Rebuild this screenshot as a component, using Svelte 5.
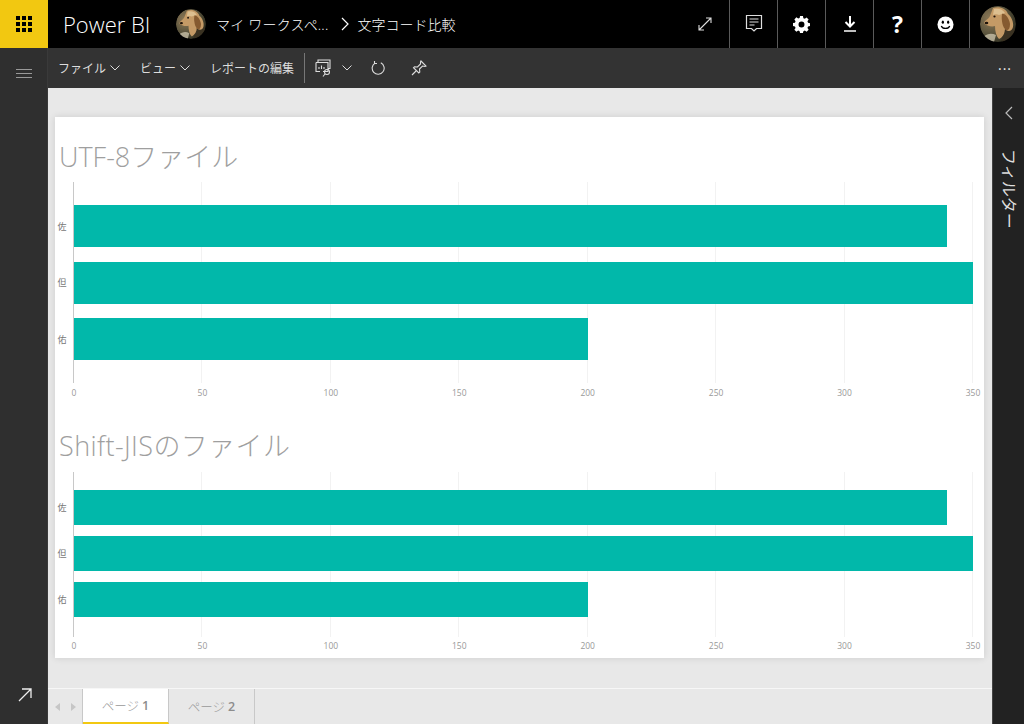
<script>
  const sections = [
    { title: 'UTF-8ファイル', cls: 'first' },
    { title: 'Shift-JISのファイル', cls: 'second' }
  ];
  const rows = [
    { label: '佐', value: 340 },
    { label: '但', value: 350 },
    { label: '佑', value: 200 }
  ];
  const ticks = [0, 50, 100, 150, 200, 250, 300, 350];
  const max = 350;
</script>

{#snippet dog(id)}
  <svg class="dog" viewBox="0 0 36 36" aria-hidden="true">
    <defs>
      <radialGradient id={id} cx="0.3" cy="0.35" r="0.8">
        <stop offset="0" stop-color="#8f7a58" />
        <stop offset="0.6" stop-color="#55503a" />
        <stop offset="1" stop-color="#26261a" />
      </radialGradient>
    </defs>
    <circle cx="18" cy="18" r="18" fill="url(#{id})" />
    <path d="M22 36c5-1 10-5 13-11l-5-13-10-3z" fill="#3a3222" />
    <path d="M13 2c6-2 13 0 15 6 3 2 6 8 5 13-1 4-4 5-7 3l-1-2c0 5-2 9-6 11-3-3-4-8-4-13-3 1-9 0-11-3 1-3 5-4 6-7z" fill="#c49a66" />
    <path d="M14 3c4-1 9 0 11 4l-6 2c-2-1-4-1-6 0z" fill="#dcbf90" />
    <path d="M22 8c3-1 7 4 8 10 0 5-2 7-4 6-3-2-5-9-4-16z" fill="#855a30" />
    <ellipse cx="6.500" cy="17" rx="1.800" ry="1.300" fill="#1f140c" />
    <circle cx="14.500" cy="10.500" r="1.100" fill="#1d130c" />
    <path d="M3 31c5-4 9-4 13-2l-2 7H8z" fill="#d8d0b8" opacity="0.700" />
  </svg>
{/snippet}

<div class="app">
  <header class="top">
    <button class="waffle" aria-label="アプリ">
      <svg viewBox="0 0 16 16" width="16" height="16" fill="#000">
        {#each [0, 6, 12] as y}
          {#each [0, 6, 12] as x}
            <rect x={x} y={y} width="4" height="4" />
          {/each}
        {/each}
      </svg>
    </button>
    <div class="brand">Power BI</div>
    <div class="avatar small">{@render dog('dog-a')}</div>
    <div class="crumb first-crumb">マイ ワークスペ...</div>
    <svg class="crumb-sep" viewBox="0 0 8 14" width="8" height="14" fill="none" stroke="#fff" stroke-width="1.200"><path d="M1 1l6 6-6 6" /></svg>
    <div class="crumb last-crumb">文字コード比較</div>

    <div class="actions">
      <div class="act plain">
        <svg viewBox="0 0 16 16" width="16" height="16" fill="none" stroke="#ddd" stroke-width="1.100"><path d="M2 14L14 2M9 2h5v5M2 9v5h5" /></svg>
      </div>
      <div class="act">
        <svg viewBox="0 0 18 20" width="18" height="20" fill="none" stroke="#ddd" stroke-width="1.200"><path d="M1.500 1.500h15v13h-5l-2.500 2.500-2.500-2.500h-5zM4.500 5h9M4.500 8h9M4.500 11h5" /></svg>
      </div>
      <div class="act">
        <svg viewBox="0 0 20 20" width="17" height="17"><path fill="#fff" fill-rule="evenodd" d="M8.300 0h3.400l.5 2.500 1.700.7 2.100-1.400 2.400 2.400-1.400 2.100.7 1.700 2.300.5v3.400l-2.300.5-.7 1.700 1.400 2.100-2.400 2.400-2.100-1.400-1.700.7-.5 2.100H8.300l-.5-2.100-1.700-.7-2.100 1.400-2.400-2.400 1.400-2.100-.7-1.700L0 11.700V8.300l2.300-.5.7-1.700-1.400-2.100L4 1.600l2.100 1.400 1.700-.7zM10 6.500a3.500 3.500 0 100 7 3.500 3.500 0 000-7z" /></svg>
      </div>
      <div class="act">
        <svg viewBox="0 0 14 16" width="14" height="16" fill="none" stroke="#fff" stroke-width="2"><path d="M7 0v10M2.500 6L7 10.500 11.500 6" /><path d="M1 15h12" stroke-width="1.500" /></svg>
      </div>
      <div class="act q">?</div>
      <div class="act">
        <svg viewBox="0 0 18 18" width="17" height="17"><circle cx="9" cy="9" r="8.500" fill="#fff" /><ellipse cx="6.200" cy="6.500" rx="1.200" ry="1.700" fill="#000" /><ellipse cx="11.800" cy="6.500" rx="1.200" ry="1.700" fill="#000" /><path d="M4.500 10.500c1.500 3.500 7.500 3.500 9 0" fill="none" stroke="#000" stroke-width="1.300" /></svg>
      </div>
      <div class="act me"><div class="avatar large">{@render dog('dog-b')}</div></div>
    </div>
  </header>

  <div class="body">
    <aside class="rail">
      <button class="burger" aria-label="メニュー"><span></span><span></span><span></span></button>
      <svg class="expand" viewBox="0 0 14 14" width="14" height="14" fill="none" stroke="#eee" stroke-width="1.300"><path d="M1 13L13 1M4 1h9v9" /></svg>
    </aside>

    <div class="main">
      <nav class="toolbar">
        <span class="menu">ファイル<svg class="chev" viewBox="0 0 10 6" width="10" height="6"><path d="M.5.500L5 5 9.500.5" /></svg></span>
        <span class="menu">ビュー<svg class="chev" viewBox="0 0 10 6" width="10" height="6"><path d="M.5.500L5 5 9.500.5" /></svg></span>
        <span class="menu">レポートの編集</span>
        <span class="divider"></span>
        <svg class="tool" viewBox="0 0 18 18" width="18" height="18" fill="none" stroke="#ddd" stroke-width="1.100"><path d="M3 3.500V1h12v8.500h-2M1 3.500h12v9H8M1 3.500v9h4M4 10V8M6.500 10V6.500M9 10V8" /><circle cx="12" cy="13" r="2.500" /><path d="M10 15l-2 2.500" /></svg>
        <svg class="chev tool-chev" viewBox="0 0 10 6" width="10" height="6"><path d="M.5.500L5 5 9.500.5" /></svg>
        <svg class="tool refresh" viewBox="0 0 14 14" width="14" height="14" fill="none" stroke="#ddd" stroke-width="1.100"><path d="M4 2.100a6 6 0 105.800-.3M3.500 0v2.500H6" /></svg>
        <svg class="tool pin" viewBox="0 0 16 16" width="16" height="16" fill="none" stroke="#ddd" stroke-width="1.100"><path d="M10 1l5 5-1 .5-2.500-.5-3 3 .3 3-1 1-5.300-5.300 1-1 3 .3 3-3L9.500 2zM5 11l-4 4" /></svg>
        <span class="more">···</span>
      </nav>

      <div class="work">
        <div class="canvas-wrap">
          <div class="canvas">
            <div class="card">
              {#each sections as s}
                <section class={s.cls}>
                  <h2>{s.title}</h2>
                  <div class="chart">
                    <div class="labels">
                      {#each rows as r}<span>{r.label}</span>{/each}
                    </div>
                    <div class="plot">
                      <div class="grid">
                        {#each ticks as t}<i></i>{/each}
                      </div>
                      <div class="bars">
                        {#each rows as r}
                          <div class="bar" style="width:{(r.value / max) * 100}%"></div>
                        {/each}
                      </div>
                    </div>
                  </div>
                  <div class="ticks">
                    {#each ticks as t}<span><b>{t}</b></span>{/each}
                  </div>
                </section>
              {/each}
            </div>
          </div>
          <div class="tabs">
            <div class="arrows">
              <svg viewBox="0 0 5 8" width="5" height="8"><path d="M5 0v8L0 4z" /></svg>
              <svg viewBox="0 0 5 8" width="5" height="8"><path d="M0 0v8l5-4z" /></svg>
            </div>
            <div class="tab active">ページ <b>1</b></div>
            <div class="tab">ページ <b>2</b></div>
          </div>
        </div>
        <aside class="filters">
          <svg viewBox="0 0 8 14" width="8" height="14" fill="none" stroke="#bbb" stroke-width="1.200"><path d="M7 1L1 7l6 6" /></svg>
          <div class="filter-label">フィルター</div>
        </aside>
      </div>
    </div>
  </div>
</div>

<style>
  :global(body) {
    margin: 0;
    background: #e8e8e8;
  }
  .app {
    width: 1024px;
    height: 724px;
    display: flex;
    flex-direction: column;
    overflow: hidden;
    font-family: "Open Sans", "Noto Sans CJK JP", sans-serif;
  }
  button {
    border: 0;
    padding: 0;
    background: none;
  }

  .top {
    height: 48px;
    flex: none;
    background: #000;
    color: #fff;
    display: flex;
    align-items: center;
  }
  .waffle {
    width: 48px;
    height: 48px;
    background: #f2c811;
    display: flex;
    align-items: center;
    justify-content: center;
  }
  .brand {
    margin-left: 15px;
    width: 113px;
    font-size: 22px;
    font-weight: 300;
    white-space: nowrap;
  }
  .avatar {
    border-radius: 50%;
    overflow: hidden;
    flex: none;
  }
  .avatar.small {
    width: 30px;
    height: 30px;
  }
  .avatar.large {
    width: 36px;
    height: 36px;
  }
  .dog {
    display: block;
    width: 100%;
    height: 100%;
    filter: blur(0.4px);
  }
  .crumb {
    font-size: 14px;
    font-weight: 300;
    white-space: nowrap;
  }
  .first-crumb {
    margin-left: 10px;
    letter-spacing: 0.2px;
  }
  .crumb-sep {
    margin-left: 13px;
  }
  .last-crumb {
    margin-left: 8px;
  }
  .actions {
    margin-left: auto;
    display: flex;
    height: 48px;
  }
  .act {
    width: 47px;
    border-left: 1px solid #5a5a5a;
    display: flex;
    align-items: center;
    justify-content: center;
  }
  .act.plain {
    border-left: 0;
    width: 48px;
  }
  .act.q {
    font-size: 23px;
    font-weight: 700;
    font-family: "Open Sans", sans-serif;
  }
  .act.me {
    width: 55px;
    justify-content: flex-start;
    padding-left: 10px;
    box-sizing: border-box;
  }

  .body {
    flex: 1;
    display: flex;
    min-height: 0;
  }
  .rail {
    width: 48px;
    flex: none;
    background: #2f2f2f;
    display: flex;
    flex-direction: column;
    align-items: center;
    border-right: 1px solid #3a3a3a;
    box-sizing: border-box;
  }
  .burger {
    margin-top: 21px;
    width: 16px;
    display: flex;
    flex-direction: column;
    gap: 3px;
  }
  .burger span {
    height: 1px;
    background: #999;
    display: block;
  }
  .expand {
    margin-top: auto;
    margin-bottom: 22px;
    margin-left: 3px;
  }

  .main {
    flex: 1;
    min-width: 0;
    display: flex;
    flex-direction: column;
  }
  .toolbar {
    height: 40px;
    flex: none;
    background: #333;
    color: #ddd;
    display: flex;
    align-items: center;
    font-size: 12px;
    padding-left: 10px;
  }
  .menu {
    display: flex;
    align-items: center;
    gap: 4px;
    margin-right: 20px;
    white-space: nowrap;
  }
  .menu:nth-child(3) {
    margin-right: 10px;
  }
  .chev {
    fill: none;
    stroke: #ddd;
    stroke-width: 1;
  }
  .divider {
    width: 1px;
    height: 30px;
    background: #777;
  }
  .tool {
    margin-left: 10px;
  }
  .tool-chev {
    margin-left: 9px;
  }
  .refresh {
    margin-left: 19px;
  }
  .pin {
    margin-left: 26px;
  }
  .more {
    margin-left: auto;
    margin-right: 12px;
    letter-spacing: 1px;
    font-size: 14px;
    font-weight: 400;
    color: #eee;
  }

  .work {
    flex: 1;
    display: flex;
    min-height: 0;
  }
  .canvas-wrap {
    flex: 1;
    min-width: 0;
    display: flex;
    flex-direction: column;
  }
  .canvas {
    flex: 1;
    padding: 29px 8px 30px 7px;
    box-sizing: border-box;
    background: #e8e8e8;
  }
  .card {
    height: 541px;
    background: #fff;
    box-shadow: 0 0 7px rgba(0, 0, 0, 0.12);
  }
  section {
    display: flex;
    flex-direction: column;
  }
  h2 {
    margin: 0;
    padding-left: 4px;
    font-size: 27px;
    font-weight: 300;
    color: #9f9f9f;
    line-height: 40px;
    white-space: nowrap;
  }
  .first h2 {
    padding-top: 20px;
    height: 45px;
  }
  .second h2 {
    padding-top: 25px;
    height: 46px;
    letter-spacing: 0.4px;
  }
  .chart {
    display: flex;
  }
  .labels {
    width: 19px;
    flex: none;
    display: flex;
    flex-direction: column;
    font-size: 9px;
    color: #777;
    box-sizing: border-box;
    padding-right: 5px;
  }
  .labels span {
    display: flex;
    align-items: center;
    justify-content: center;
  }
  .first .labels {
    padding-top: 23px;
    gap: 14.500px;
  }
  .first .labels span {
    height: 42px;
  }
  .second .labels {
    padding-top: 18px;
    gap: 11px;
  }
  .second .labels span {
    height: 35px;
  }
  .plot {
    position: relative;
    width: 899px;
    border-left: 1.500px solid #c8c8c8;
    box-sizing: content-box;
    margin-left: -1px;
  }
  .first .plot {
    height: 201px;
  }
  .second .plot {
    height: 165px;
  }
  .grid {
    position: absolute;
    inset: 0;
    display: flex;
    justify-content: space-between;
  }
  .grid i {
    width: 0;
    border-left: 1px solid #f2f2f2;
  }
  .grid i:first-child {
    border: 0;
  }
  .bars {
    position: relative;
    display: flex;
    flex-direction: column;
  }
  .first .bars {
    padding-top: 23px;
    gap: 14.500px;
  }
  .second .bars {
    padding-top: 18px;
    gap: 11px;
  }
  .bar {
    background: #01b8aa;
  }
  .first .bar {
    height: 42px;
  }
  .second .bar {
    height: 35px;
  }
  .ticks {
    margin-left: 19px;
    width: 899px;
    display: flex;
    justify-content: space-between;
    height: 18px;
    align-items: center;
  }
  .second .ticks {
    height: 17px;
  }
  .ticks span {
    width: 0;
    display: flex;
    justify-content: center;
  }
  .ticks b {
    font-weight: 400;
    font-size: 8.500px;
    color: #999;
  }

  .tabs {
    height: 36px;
    flex: none;
    border-top: 1px solid #f7f7f7;
    box-sizing: border-box;
    display: flex;
    background: #e8e8e8;
  }
  .arrows {
    width: 35px;
    display: flex;
    gap: 11px;
    align-items: center;
    justify-content: center;
    border-right: 1px solid #c8c8c8;
    box-sizing: border-box;
    fill: #c6c6c6;
  }
  .tab {
    width: 86px;
    display: flex;
    align-items: center;
    justify-content: center;
    gap: 3px;
    font-size: 12.500px;
    color: #999;
    font-weight: 300;
    border-right: 1px solid #c8c8c8;
    box-sizing: border-box;
    white-space: nowrap;
  }
  .tab b {
    font-weight: 600;
    color: #8c8c8c;
  }
  .tab.active {
    background: #fff;
    border-bottom: 2px solid #f2c811;
  }

  .filters {
    width: 32px;
    flex: none;
    background: #222;
    border-left: 1px solid #444;
    box-sizing: border-box;
    display: flex;
    flex-direction: column;
    align-items: center;
    color: #ddd;
    padding-top: 18px;
  }
  .filter-label {
    margin-top: 29px;
    margin-left: 2px;
    writing-mode: vertical-rl;
    text-orientation: sideways;
    font-size: 16px;
    font-weight: 400;
    color: #ddd;
    white-space: nowrap;
  }
</style>
